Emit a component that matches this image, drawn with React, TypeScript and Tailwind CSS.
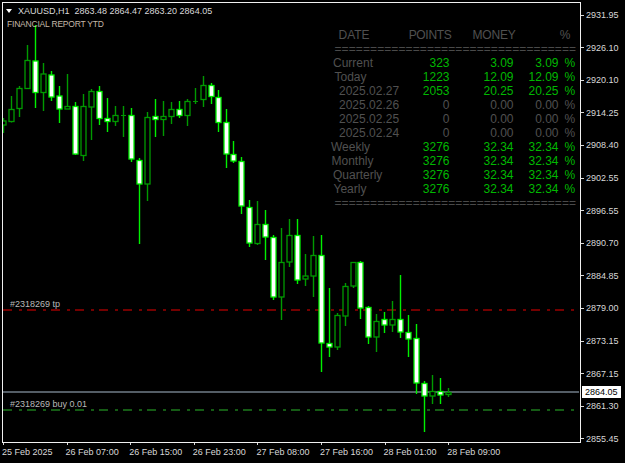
const font = "font-['Liberation_Sans',Arial,sans-serif]";

// x, high, low, body top, body bottom, white (filled) or hollow
const candles: [number, number, number, number, number, boolean][] = [
  [3, 118, 133, 121, 125, false],
  [11, 96, 122.5, 109.5, 121.5, false],
  [19, 86, 117, 88.5, 108.5, false],
  [27, 45, 89, 60.5, 88.5, false],
  [35, 25, 108, 61, 92.5, true],
  [43, 63, 111, 74, 92.5, false],
  [51, 71, 101, 75, 97, true],
  [59, 86, 123, 96, 109, true],
  [67, 74, 109, 106.5, 109, false],
  [75, 102, 155, 106.5, 154, true],
  [83, 94, 161, 106.5, 155.5, false],
  [91, 89, 140, 91.5, 107, false],
  [99, 86, 125, 91.5, 118.5, true],
  [107, 98, 132, 118.5, 121.5, true],
  [115, 106, 126, 115.5, 121.5, false],
  [123, 106, 137, 115, 115, false],
  [131, 108, 162, 115.5, 159, true],
  [139, 158, 244, 160.5, 184, true],
  [147, 112, 201, 117.5, 184, false],
  [155, 99, 137, 116.5, 119.5, true],
  [163, 101, 136, 116.5, 119.5, false],
  [171, 102, 124, 109.5, 116.5, false],
  [179, 101, 118, 109.5, 115.5, true],
  [187, 99, 126, 101.5, 115.5, false],
  [195, 88, 104, 101, 101, false],
  [203, 76, 107, 85.5, 99.5, false],
  [211, 83, 104, 85.5, 96.5, true],
  [218, 90, 132, 97.5, 122.5, true],
  [226, 109, 168, 122.5, 154, true],
  [233, 141, 163, 154.5, 161, true],
  [241, 157, 214, 161.5, 206, true],
  [249, 200, 247, 207.5, 243, true],
  [257, 201, 245, 224.5, 243.5, false],
  [265, 210, 260, 224.5, 237, true],
  [273, 235, 300, 237.5, 297, true],
  [281, 228, 320, 262.5, 297, false],
  [289, 219, 267, 235.5, 262, false],
  [297, 219, 284, 235.5, 280, true],
  [305, 254, 286, 276, 279, false],
  [313, 236, 297, 255.5, 276, false],
  [321, 235, 372, 255.5, 343, true],
  [329, 288, 357, 343.5, 347, true],
  [337, 313, 350, 315.5, 347, false],
  [345, 283, 326, 286.5, 316, false],
  [353, 262, 288, 262.5, 286, false],
  [360, 261, 319, 262.5, 308, true],
  [368, 306, 344, 307.5, 337, true],
  [376, 314, 352, 321.5, 337, false],
  [384, 312, 333, 319.5, 325, true],
  [392, 301, 332, 319.5, 325, false],
  [400, 275, 338, 319.5, 332, true],
  [408, 315, 357, 332.5, 339, true],
  [416, 324, 394, 338.5, 383, true],
  [424, 381, 432, 383.5, 396, true],
  [432, 375, 404, 391.5, 396, false],
  [440, 378, 404, 391.5, 395, true],
  [448, 388, 397, 392.5, 394.5, false],
];

const prices = [
  "2931.95", "2926.10", "2920.10", "2914.25", "2908.40", "2902.55", "2896.55",
  "2890.70", "2884.85", "2879.00", "2873.15", "2867.15", "2861.30", "2855.45",
];

const times = [
  "25 Feb 2025", "26 Feb 07:00", "26 Feb 15:00", "26 Feb 23:00",
  "27 Feb 08:00", "27 Feb 16:00", "28 Feb 01:00", "28 Feb 09:00",
];

const rows = [
  { label: "Current", pad: "pl-[3.5px]", points: "323", money: "3.09", pct: "3.09", on: true },
  { label: "Today", pad: "pl-[5px]", points: "1223", money: "12.09", pct: "12.09", on: true },
  { label: "2025.02.27", pad: "pl-[9.5px]", points: "2053", money: "20.25", pct: "20.25", on: true },
  { label: "2025.02.26", pad: "pl-[9.5px]", points: "0", money: "0.00", pct: "0.00", on: false },
  { label: "2025.02.25", pad: "pl-[9.5px]", points: "0", money: "0.00", pct: "0.00", on: false },
  { label: "2025.02.24", pad: "pl-[9.5px]", points: "0", money: "0.00", pct: "0.00", on: false },
  { label: "Weekly", pad: "pl-[1.5px]", points: "3276", money: "32.34", pct: "32.34", on: true },
  { label: "Monthly", pad: "pl-[2px]", points: "3276", money: "32.34", pct: "32.34", on: true },
  { label: "Quarterly", pad: "pl-[3.5px]", points: "3276", money: "32.34", pct: "32.34", on: true },
  { label: "Yearly", pad: "pl-[4px]", points: "3276", money: "32.34", pct: "32.34", on: true },
];

const cols = "grid grid-cols-[80px_40px_64px_45px_18px]";

const Separator = () => (
  <div className="h-[14px] whitespace-nowrap pl-[5px] leading-[14px] tracking-[0.1px] text-[#4a4a4a]">
    {"=".repeat(34)}
  </div>
);

const Chart = () => (
  <svg className="block" width="577" height="439" viewBox="3 3 577 439">
    <line x1="3" x2="579" y1="310" y2="310" stroke="#9a0000" strokeWidth="1.4" strokeDasharray="9 7 3 5" />
    <line x1="3" x2="579" y1="392" y2="392" stroke="#707c88" strokeWidth="1.4" />
    <line x1="3" x2="579" y1="410" y2="410" stroke="#1c7a1c" strokeWidth="1.4" strokeDasharray="9 7 3 5" />
    {candles.map(([x, high, low, top, bottom, white]) => {
      const color = white ? "#00f000" : "#009a00";
      return (
        <g key={x}>
          <line x1={x + 0.5} x2={x + 0.5} y1={high} y2={low} stroke={color} strokeWidth="1.4" />
          {top === bottom ? (
            <line x1={x - 2} x2={x + 3} y1={top + 0.5} y2={top + 0.5} stroke={color} />
          ) : (
            <rect
              x={x - 2}
              y={top}
              width="5"
              height={bottom - top}
              fill={white ? "#ffffff" : "#000000"}
              stroke={color}
              strokeWidth="1.3"
            />
          )}
        </g>
      );
    })}
  </svg>
);

export default function App() {
  return (
    <div className={`flex h-[463px] w-[625px] flex-col overflow-hidden bg-black pl-[2px] pt-[2px] ${font}`}>
      <div className="flex h-[441px]">
        {/* chart area */}
        <div className="relative h-[441px] w-[579px] border-[1.5px] border-[#f0f0f0] text-[9px] text-[#d8d8d8]">
          <Chart />

          <div className="absolute left-[3px] top-[2px] flex items-center gap-[6px] whitespace-pre leading-[12px]">
            <span className="h-0 w-0 border-x-[3.5px] border-t-[4px] border-x-transparent border-t-white" />
            <span>XAUUSD,H1  2863.48 2864.47 2863.20 2864.05</span>
          </div>
          <div className="absolute left-[4px] top-[15px] whitespace-nowrap text-[8.5px] leading-[12px] tracking-[-0.2px] text-[#c4b8a8]">FINANCIAL REPORT YTD</div>
          <div className="absolute left-[7px] top-[295px] leading-[12px] text-[#b8b8b8]">#2318269 tp</div>
          <div className="absolute left-[7px] top-[395px] leading-[12px] text-[#b8b8b8]">#2318269 buy 0.01</div>

          {/* report table */}
          <div className="absolute left-[326.5px] top-[25px] w-[247px] text-[12px] leading-[14px]">
            <div className={`${cols} text-[#505050]`}>
              <span className="pl-[9px]">DATE</span>
              <span className="justify-self-end translate-x-[2px] whitespace-nowrap tracking-[-0.3px]">POINTS</span>
              <span className="justify-self-end translate-x-[2px] whitespace-nowrap tracking-[-0.2px]">MONEY</span>
              <span className="justify-self-end translate-x-[12px]">%</span>
              <span />
            </div>
            <Separator />
            {rows.map((r) => {
              const value = r.on ? "text-[#00b800]" : "text-[#505050]";
              return (
                <div key={r.label} className={`${cols} h-[14px]`}>
                  <span className={`${r.pad} text-[#505050]`}>{r.label}</span>
                  <span className={`text-right ${value}`}>{r.points}</span>
                  <span className={`text-right ${value}`}>{r.money}</span>
                  <span className={`text-right ${value}`}>{r.pct}</span>
                  <span className={`pl-[6px] ${value}`}>%</span>
                </div>
              );
            })}
            <Separator />
          </div>
        </div>

        {/* price axis */}
        <div className="relative flex h-[443px] flex-1 flex-col justify-between pt-[7px] text-[9px] leading-[12px] text-[#d8d8d8]">
          {prices.map((p) => (
            <div key={p} className="flex items-center gap-[2px]">
              <span className="h-px w-[3px] bg-[#d8d8d8]" />
              <span>{p}</span>
            </div>
          ))}
          <div className="absolute left-px top-[384px] h-[12px] w-[39px] bg-white pl-[3px] text-black">2864.05</div>
        </div>
      </div>

      {/* time axis */}
      <div className="grid grid-cols-[repeat(8,63.6px)] text-[9px] leading-[12px] text-[#d8d8d8]">
        {times.map((t) => (
          <div key={t} className="flex flex-col">
            <span className="ml-px h-[2px] w-px bg-[#d8d8d8]" />
            <span className="mt-px whitespace-nowrap">{t}</span>
          </div>
        ))}
      </div>
    </div>
  );
}
